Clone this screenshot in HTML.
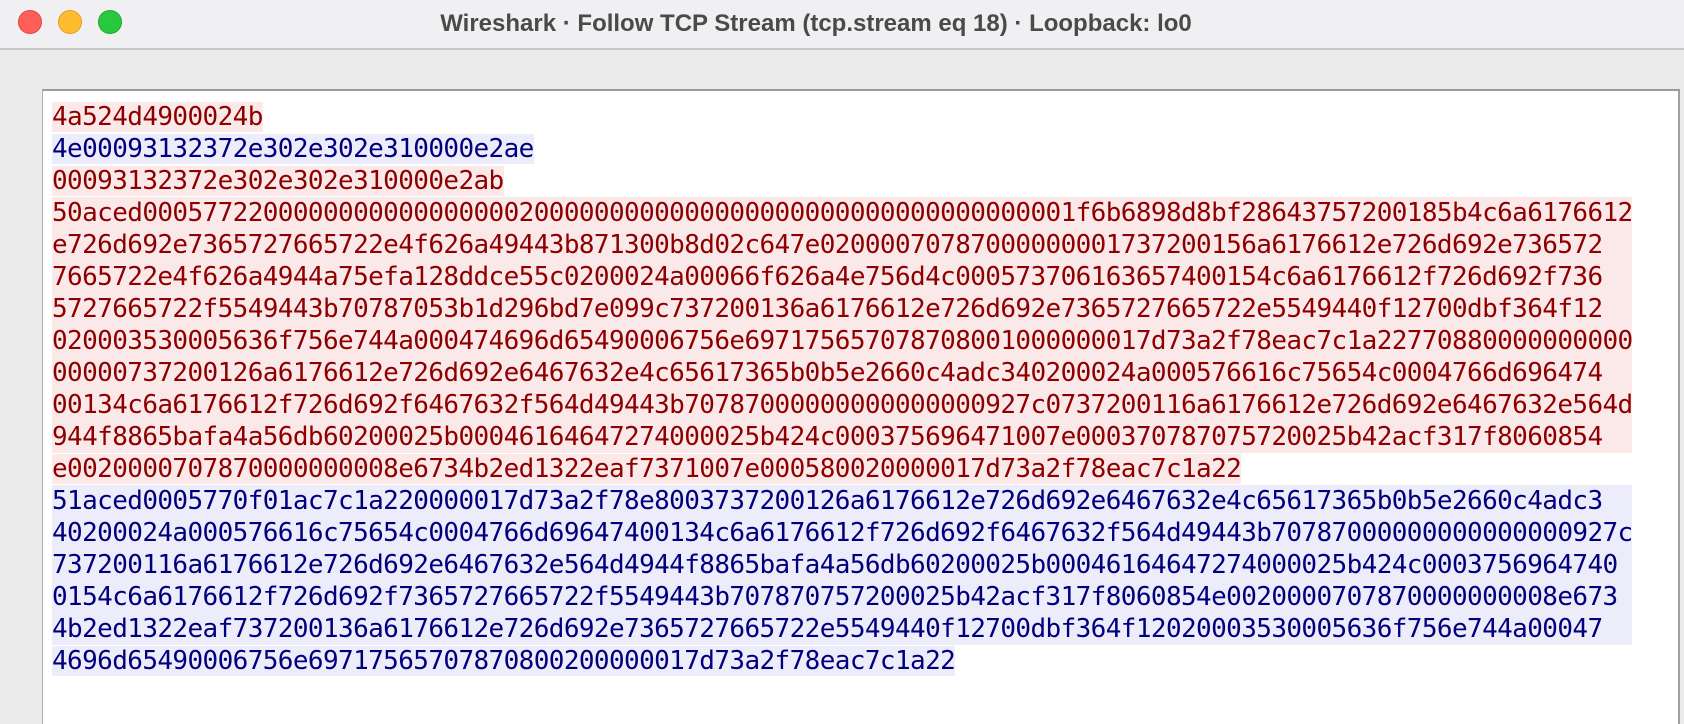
<!DOCTYPE html>
<html><head><meta charset="utf-8"><style>
html,body{margin:0;padding:0;width:1684px;height:724px;overflow:hidden;background:#ebebeb;font-family:"Liberation Sans",sans-serif;}
.title{position:absolute;left:0;top:0;width:1684px;height:50px;background:#f0f0f2;border-bottom:2px solid #c8c8c8;box-sizing:border-box;}
.title .t{position:absolute;left:0;right:52px;top:10px;text-align:center;font-weight:bold;font-size:24px;color:#4a4a4a;}
.dot{position:absolute;top:10px;width:24px;height:24px;border-radius:50%;}
.pane{position:absolute;left:42px;top:89px;width:1638px;height:635px;background:#fff;border-top:2px solid #9a9a9a;border-left:1px solid #b0b0b0;border-right:2px solid #a0a0a0;box-sizing:border-box;overflow:hidden;}
.txt{position:absolute;left:9px;top:10px;font-family:"DejaVu Sans Mono","Liberation Mono",monospace;font-size:26px;letter-spacing:-0.6px;line-height:32px;}
.txt div{height:32px;white-space:nowrap;}
.txt div.f{width:1580px;overflow:hidden;}
.r{color:#8e0000;background:#fbe9e9;}
.b{color:#00007e;background:#ececfa;}
</style></head><body>
<div class="title">
<div class="dot" style="left:18px;background:#fe5f57;border:1px solid #e0443e;box-sizing:border-box"></div>
<div class="dot" style="left:58px;background:#febc2e;border:1px solid #dea123;box-sizing:border-box"></div>
<div class="dot" style="left:98px;background:#28c840;border:1px solid #1aab29;box-sizing:border-box"></div>
<div class="t">Wireshark · Follow TCP Stream (tcp.stream eq 18) · Loopback: lo0</div>
</div>
<div class="pane"><div class="txt"><div><span class="r">4a524d4900024b</span></div><div><span class="b">4e00093132372e302e302e310000e2ae</span></div><div><span class="r">00093132372e302e302e310000e2ab</span></div><div class="f r">50aced00057722000000000000000002000000000000000000000000000000000001f6b6898d8bf28643757200185b4c6a6176612</div><div class="f r">e726d692e7365727665722e4f626a49443b871300b8d02c647e02000070787000000001737200156a6176612e726d692e736572</div><div class="f r">7665722e4f626a4944a75efa128ddce55c0200024a00066f626a4e756d4c000573706163657400154c6a6176612f726d692f736</div><div class="f r">5727665722f5549443b70787053b1d296bd7e099c737200136a6176612e726d692e7365727665722e5549440f12700dbf364f12</div><div class="f r">020003530005636f756e744a000474696d65490006756e697175657078708001000000017d73a2f78eac7c1a22770880000000000</div><div class="f r">00000737200126a6176612e726d692e6467632e4c65617365b0b5e2660c4adc340200024a000576616c75654c0004766d696474</div><div class="f r">00134c6a6176612f726d692f6467632f564d49443b70787000000000000000927c0737200116a6176612e726d692e6467632e564d4</div><div class="f r">944f8865bafa4a56db60200025b00046164647274000025b424c000375696471007e000370787075720025b42acf317f8060854</div><div><span class="r">e0020000707870000000008e6734b2ed1322eaf7371007e000580020000017d73a2f78eac7c1a22</span></div><div class="f b">51aced0005770f01ac7c1a220000017d73a2f78e8003737200126a6176612e726d692e6467632e4c65617365b0b5e2660c4adc3</div><div class="f b">40200024a000576616c75654c0004766d69647400134c6a6176612f726d692f6467632f564d49443b70787000000000000000927c0</div><div class="f b">737200116a6176612e726d692e6467632e564d4944f8865bafa4a56db60200025b00046164647274000025b424c0003756964740</div><div class="f b">0154c6a6176612f726d692f7365727665722f5549443b707870757200025b42acf317f8060854e0020000707870000000008e673</div><div class="f b">4b2ed1322eaf737200136a6176612e726d692e7365727665722e5549440f12700dbf364f12020003530005636f756e744a00047</div><div><span class="b">4696d65490006756e69717565707870800200000017d73a2f78eac7c1a22</span></div></div></div>
</body></html>
